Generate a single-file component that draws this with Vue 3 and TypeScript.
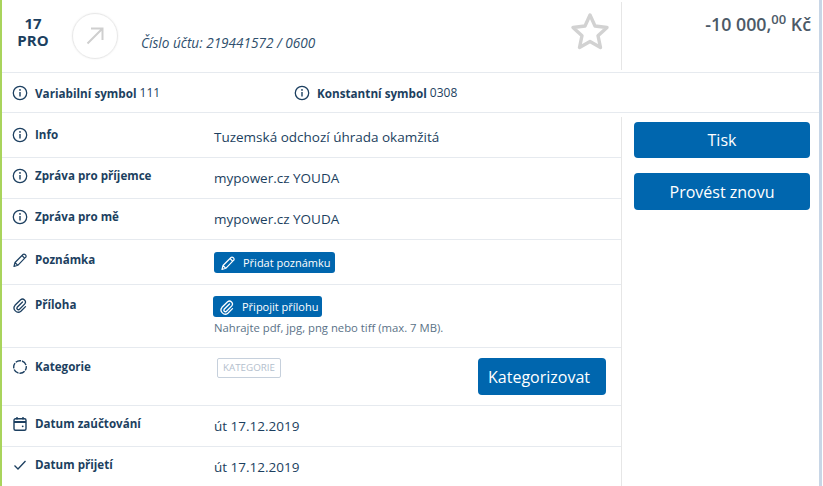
<script setup lang="ts">
interface Row {
  label: string
  icon: 'info' | 'calendar' | 'check'
  value: string
  height: number
}

const topRows: Row[] = [
  { label: 'Info', icon: 'info', value: 'Tuzemská odchozí úhrada okamžitá', height: 45 },
  { label: 'Zpráva pro příjemce', icon: 'info', value: 'mypower.cz YOUDA', height: 41 },
  { label: 'Zpráva pro mě', icon: 'info', value: 'mypower.cz YOUDA', height: 41 },
]

const dateRows: Row[] = [
  { label: 'Datum zaúčtování', icon: 'calendar', value: 'út 17.12.2019', height: 41 },
  { label: 'Datum přijetí', icon: 'check', value: 'út 17.12.2019', height: 40 },
]
</script>

<template>
  <div class="page">
    <header class="head">
      <div class="head-main">
        <div class="day">
          <div>17</div>
          <div>PRO</div>
        </div>
        <div class="circle">
          <svg width="20" height="20" viewBox="0 0 20 20" fill="none" stroke="#cfcfcf" stroke-width="2">
            <path d="M2.500 17.500 17.500 2.500M6 2.500h11.500V14" />
          </svg>
        </div>
        <div class="account">Číslo účtu: 219441572 / 0600</div>
        <svg class="star" width="40" height="38" viewBox="0 0 40 38" fill="none" stroke="#d2d2d2" stroke-width="3.400" stroke-linejoin="round">
          <path d="M20 3l5 11 12 1.500-9 8.200 2.500 11.800L20 29.500 9.500 35.500 12 23.700 3 15.500 15 14z" />
        </svg>
      </div>
      <div class="amount">-10 000,<sup>00</sup> Kč</div>
    </header>

    <div class="symbols">
      <div class="symbol symbol-first">
        <svg class="symbol-icon" width="16" height="16" viewBox="0 0 16 16">
          <circle cx="8" cy="8" r="6.700" fill="none" stroke="#1c3f60" stroke-width="1.300" />
          <path d="M8 7v4.500" stroke="#1c3f60" stroke-width="1.400" />
          <circle cx="8" cy="4.900" r=".9" fill="#1c3f60" />
        </svg>
        <b>Variabilní symbol</b> 111
      </div>
      <div class="symbol">
        <svg class="symbol-icon" width="16" height="16" viewBox="0 0 16 16">
          <circle cx="8" cy="8" r="6.700" fill="none" stroke="#1c3f60" stroke-width="1.300" />
          <path d="M8 7v4.500" stroke="#1c3f60" stroke-width="1.400" />
          <circle cx="8" cy="4.900" r=".9" fill="#1c3f60" />
        </svg>
        <b>Konstantní symbol</b> 0308
      </div>
    </div>

    <div class="body">
      <div class="details">
        <div v-for="row in topRows" :key="row.label" class="row" :style="{ height: row.height + 'px' }">
          <svg class="icon" width="16" height="16" viewBox="0 0 16 16">
            <circle cx="8" cy="8" r="6.700" fill="none" stroke="#1c3f60" stroke-width="1.300" />
            <path d="M8 7v4.500" stroke="#1c3f60" stroke-width="1.400" />
            <circle cx="8" cy="4.900" r=".9" fill="#1c3f60" />
          </svg>
          <div class="label">{{ row.label }}</div>
          <div class="value">{{ row.value }}</div>
        </div>

        <div class="row row-note">
          <svg class="icon" width="16" height="16" viewBox="0 0 16 16" fill="none" stroke="#1c3f60" stroke-width="1.200" stroke-linejoin="round">
            <path d="M2 14.500l1-4L11 2.500a1.400 1.400 0 0 1 2 0l.7.7a1.400 1.400 0 0 1 0 2L5.800 13.300zM3 10.500l2.800 2.800M10 3.500l2.800 2.800" />
          </svg>
          <div class="label">Poznámka</div>
          <div class="value">
            <button class="small-btn" type="button">
              <svg width="16" height="16" viewBox="0 0 16 16" fill="none" stroke="#fff" stroke-width="1.200" stroke-linejoin="round">
                <path d="M2 14.500l1-4L11 2.500a1.400 1.400 0 0 1 2 0l.7.7a1.400 1.400 0 0 1 0 2L5.800 13.300zM3 10.500l2.800 2.800M10 3.500l2.800 2.800" />
              </svg>
              Přidat poznámku
            </button>
          </div>
        </div>

        <div class="row row-attach">
          <svg class="icon" width="16" height="16" viewBox="0 0 16 16" fill="none" stroke="#1c3f60" stroke-width="1.300" stroke-linecap="round">
            <path d="M10.500 5 5.200 10.300a1.500 1.500 0 0 0 2.100 2.100l5.500-5.500a3 3 0 0 0-4.200-4.200L3 8.300a4.200 4.200 0 0 0 5.900 5.900l4.600-4.600" />
          </svg>
          <div class="label">Příloha</div>
          <div class="value attach">
            <button class="small-btn" type="button">
              <svg width="16" height="16" viewBox="0 0 16 16" fill="none" stroke="#fff" stroke-width="1.300" stroke-linecap="round">
                <path d="M10.500 5 5.200 10.300a1.500 1.500 0 0 0 2.100 2.100l5.500-5.500a3 3 0 0 0-4.200-4.200L3 8.300a4.200 4.200 0 0 0 5.900 5.900l4.600-4.600" />
              </svg>
              Připojit přílohu
            </button>
            <div class="hint">Nahrajte pdf, jpg, png nebo tiff (max. 7 MB).</div>
          </div>
        </div>

        <div class="row row-category">
          <svg class="icon" width="16" height="16" viewBox="0 0 16 16" fill="none" stroke="#1c3f60" stroke-width="1.400">
            <circle cx="8" cy="8" r="6.300" stroke-dasharray="5.600 1" stroke-dashoffset="2" />
          </svg>
          <div class="label">Kategorie</div>
          <div class="value category">
            <span class="tag">KATEGORIE</span>
            <button class="big-btn categorize" type="button">Kategorizovat</button>
          </div>
        </div>

        <div v-for="row in dateRows" :key="row.label" class="row" :style="{ height: row.height + 'px' }">
          <svg v-if="row.icon === 'calendar'" class="icon" width="16" height="16" viewBox="0 0 16 16" fill="none" stroke="#1c3f60" stroke-width="1.400">
            <rect x="2" y="2.800" width="12" height="11.400" rx="1.500" />
            <path d="M2 6h12" stroke-width="2" />
            <path d="M5 1v2.500M11 1v2.500" />
            <circle cx="10.700" cy="10.300" r=".9" fill="#1c3f60" stroke="none" />
          </svg>
          <svg v-else class="icon" width="16" height="16" viewBox="0 0 16 16" fill="none" stroke="#1c3f60" stroke-width="1.300">
            <path d="M2.500 8.500l3.500 3.500 7.500-8" />
          </svg>
          <div class="label">{{ row.label }}</div>
          <div class="value">{{ row.value }}</div>
        </div>
      </div>

      <aside class="actions">
        <button class="big-btn print" type="button">Tisk</button>
        <button class="big-btn" type="button">Provést znovu</button>
      </aside>
    </div>
  </div>
</template>

<style scoped>
.page {
  box-sizing: border-box;
  width: 822px;
  height: 486px;
  overflow: hidden;
  border-left: 2px solid #a9d45c;
  border-right: 3px solid #c8d6e6;
  background: #fff;
  font-family: "Open Sans", "Liberation Sans", sans-serif;
  color: #1c3f60;
}
.head {
  display: flex;
  height: 72px;
  border-bottom: 1px solid #e6eaef;
}
.head-main {
  display: flex;
  flex: none;
  width: 619px;
}
.day {
  flex: none;
  width: 62px;
  padding-top: 15px;
  text-align: center;
  font-size: 15px;
  font-weight: 700;
  line-height: 17px;
}
.circle {
  display: flex;
  align-items: center;
  justify-content: center;
  flex: none;
  width: 44px;
  height: 44px;
  margin: 13px 0 0 8px;
  border: 1px solid #e8e8e8;
  border-radius: 50%;
  box-shadow: 0 0 2px rgba(0, 0, 0, 0.08);
}
.account {
  flex: 1;
  margin: 34px 0 0 23px;
  font-size: 13.600px;
  font-style: italic;
  line-height: 18px;
  color: #2f4f6d;
  white-space: nowrap;
}
.star {
  flex: none;
  margin: 12px 11px 0 0;
}
.amount {
  flex: 1;
  box-sizing: border-box;
  height: 68px;
  margin-top: 2px;
  padding: 11px 8px 0 0;
  border-left: 1px solid #e6e6e6;
  text-align: right;
  font-size: 17.800px;
  font-weight: 600;
  line-height: 22px;
  color: #4c5a68;
  white-space: nowrap;
}
.amount sup {
  font-size: 13px;
  font-weight: 600;
  line-height: 0;
}
.symbols {
  display: flex;
  align-items: center;
  height: 39px;
  border-bottom: 1px solid #e6eaef;
  font-size: 12px;
}
.symbol {
  display: flex;
  align-items: center;
  gap: 3px;
  padding-left: 10px;
  white-space: nowrap;
}
.symbol-first {
  width: 272px;
}
.symbol-icon {
  flex: none;
  margin-right: 4px;
}
.symbol b {
  font-size: 11.700px;
  font-weight: 700;
}
.body {
  display: flex;
}
.details {
  flex: none;
  width: 619px;
}
.row {
  display: flex;
  box-sizing: border-box;
  padding-top: 0;
  border-bottom: 1px solid #e6eaef;
}
.row:first-child {
  padding-top: 4px;
}
.row:last-child {
  border-bottom: 0;
}
.icon {
  flex: none;
  margin: 10px 0 0 10px;
}
.label {
  flex: none;
  width: 179px;
  margin: 8px 0 0 7px;
  font-size: 11.600px;
  font-weight: 700;
  line-height: 20px;
}
.value {
  flex: 1;
  margin-top: 10px;
  font-size: 13.500px;
  line-height: 21px;
  white-space: nowrap;
}
.row-note {
  height: 45px;
  padding-top: 2px;
}
.row-attach {
  height: 63px;
  padding-top: 2px;
}
.row-category {
  height: 58px;
  padding-top: 1px;
}
.attach {
  margin: 9px 0 0 -1px;
}
.small-btn {
  display: inline-flex;
  align-items: center;
  gap: 7px;
  height: 21px;
  padding: 0 4px 0 6px;
  border: 0;
  border-radius: 3px;
  background: #0066ae;
  color: #fff;
  font-family: inherit;
  font-size: 11px;
  vertical-align: top;
}
.hint {
  margin: 3px 0 0 1px;
  font-size: 11.300px;
  line-height: 15px;
  color: #5a7287;
}
.category {
  display: flex;
  align-items: flex-start;
  justify-content: space-between;
  margin: 9px 15px 0 3px;
}
.tag {
  box-sizing: border-box;
  height: 20px;
  padding: 0 5px;
  border: 1px solid #c6d0dc;
  border-radius: 2px;
  font-size: 9.800px;
  line-height: 18px;
  color: #b4c0cd;
}
.big-btn {
  height: 37px;
  border: 0;
  border-radius: 4px;
  background: #0066ae;
  color: #fff;
  font-family: inherit;
  font-size: 16px;
  cursor: pointer;
}
.print {
  height: 36px;
}
.categorize {
  width: 128px;
  padding: 0 6px 0 0;
}
.actions {
  flex: none;
  box-sizing: border-box;
  display: flex;
  flex-direction: column;
  gap: 15px;
  width: 198px;
  height: 369px;
  margin-top: 4px;
  padding: 5px 9px 0 12px;
  border-left: 1px solid #e6e6e6;
}
</style>
